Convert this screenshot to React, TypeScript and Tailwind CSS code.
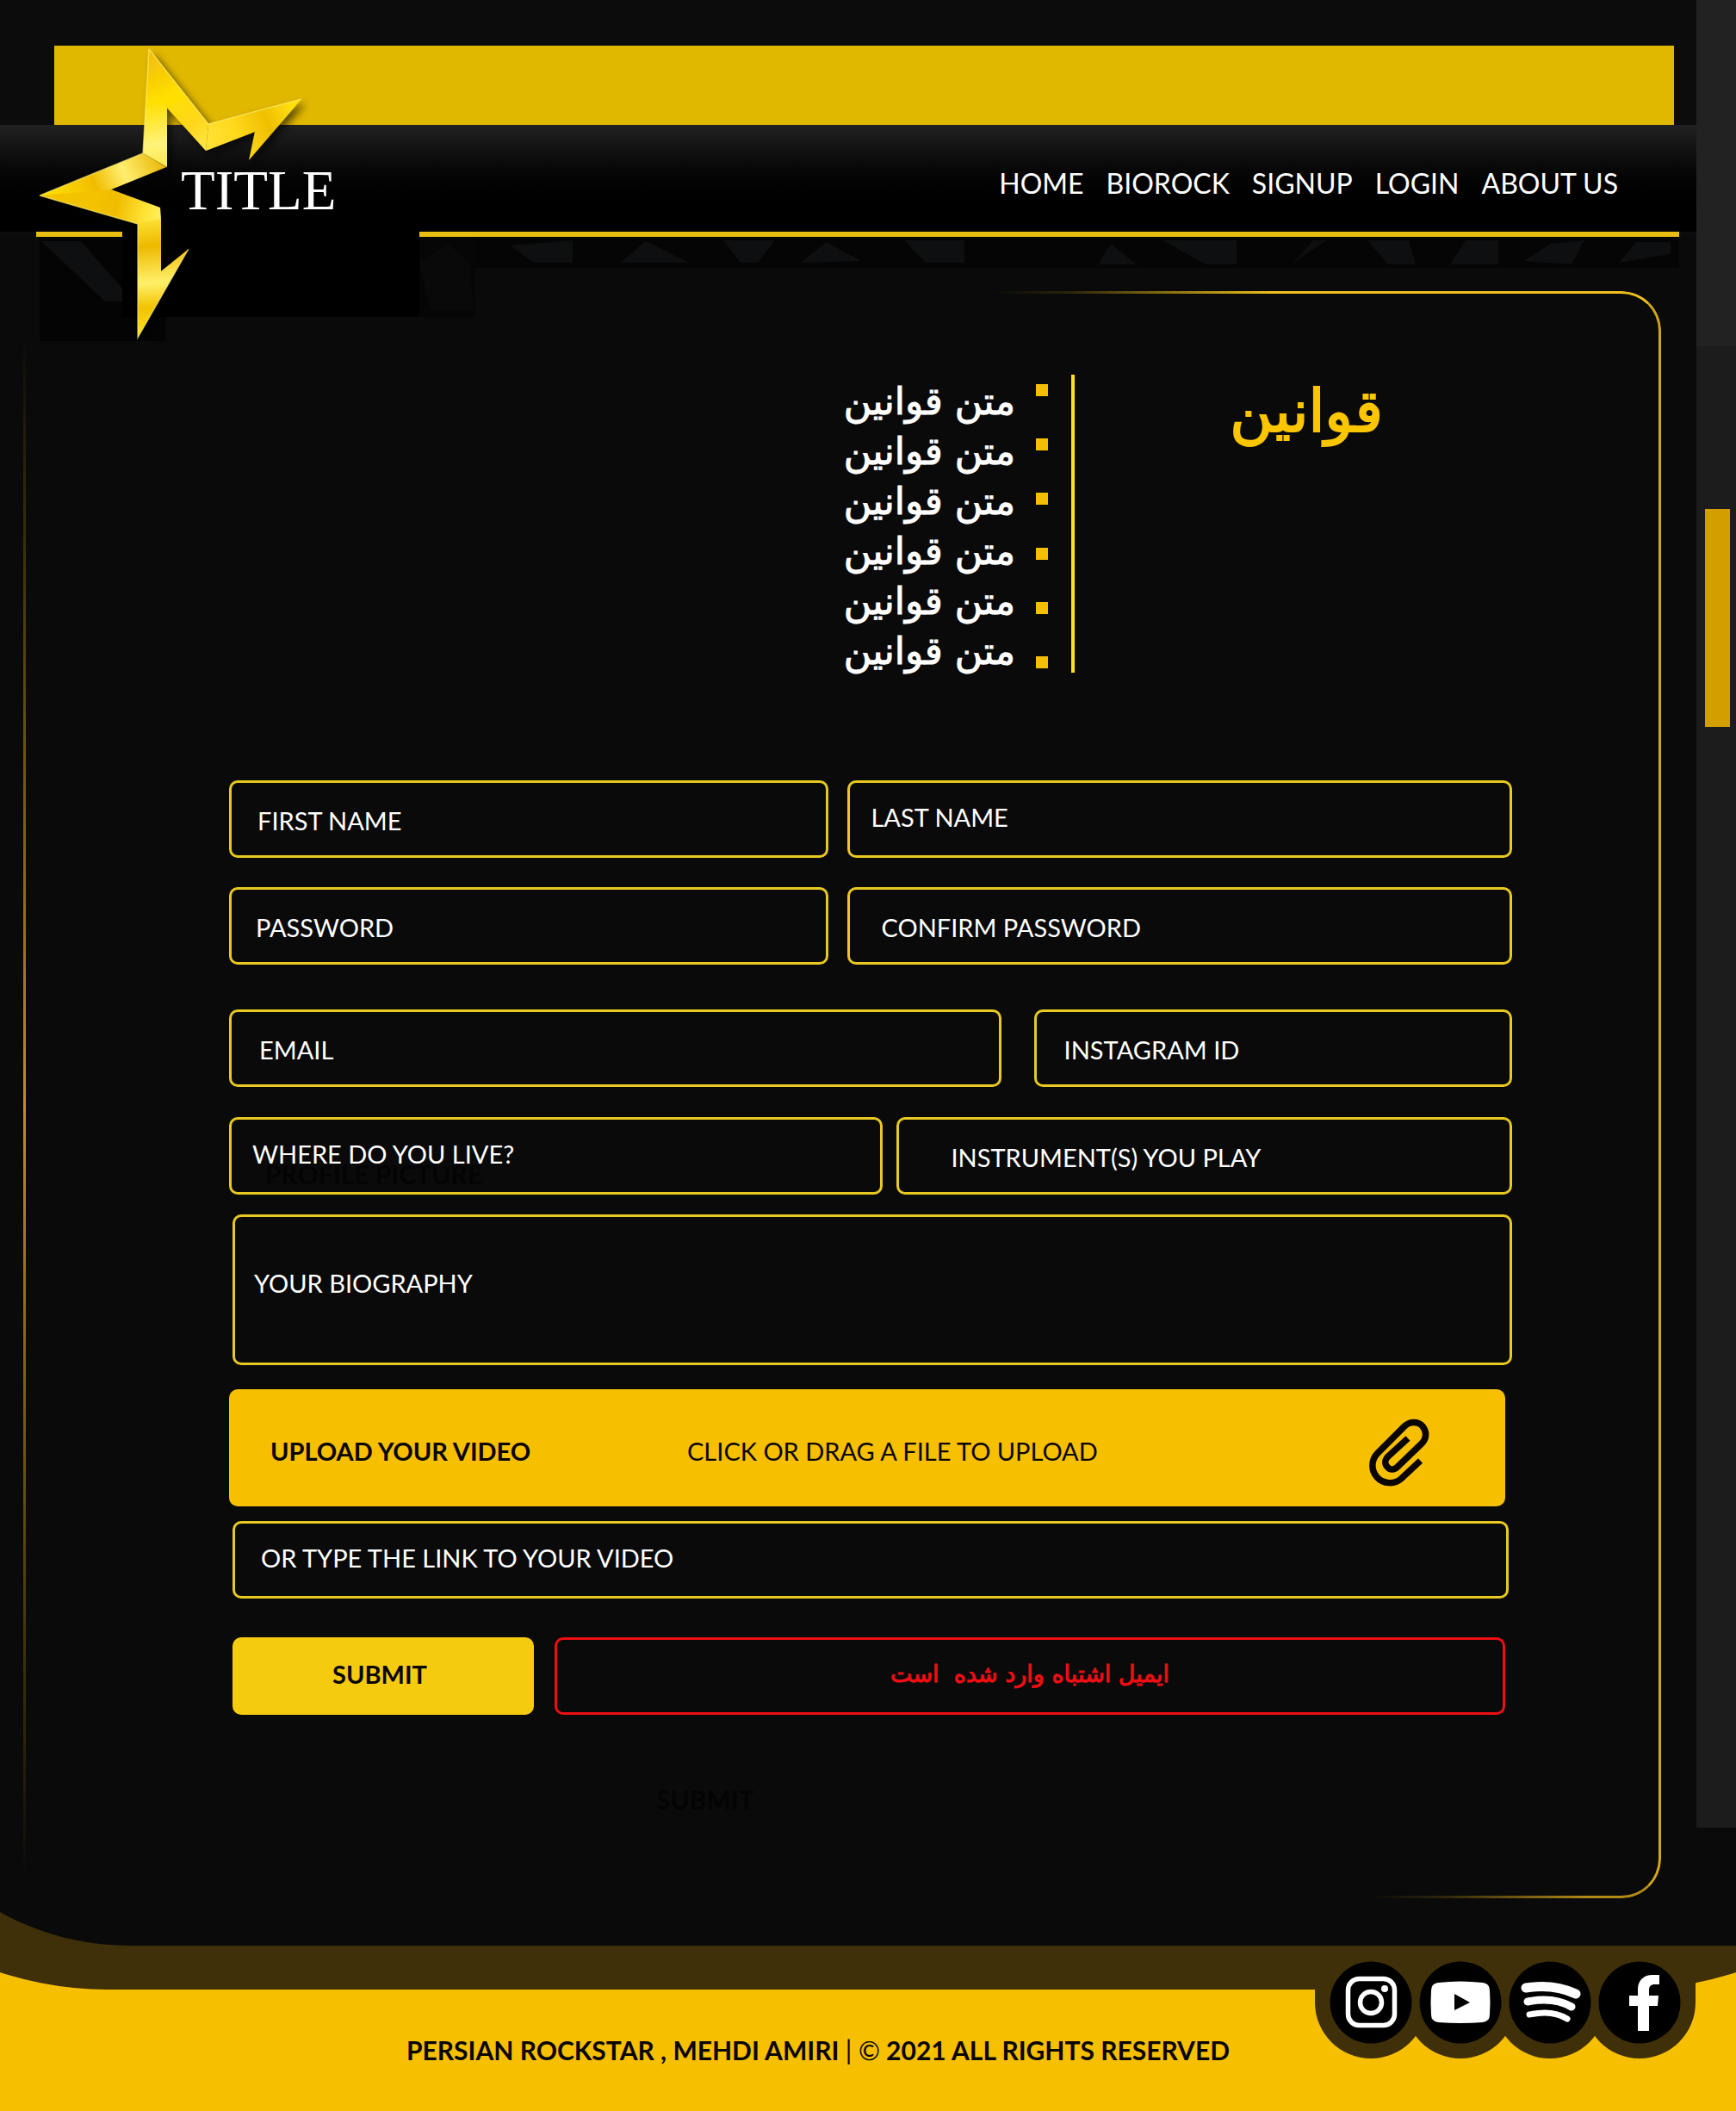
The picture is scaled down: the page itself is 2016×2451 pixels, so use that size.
import React from "react";

const NAV = ["HOME", "BIOROCK", "SIGNUP", "LOGIN", "ABOUT US"];
const RULES = [1, 2, 3, 4, 5, 6];

function Field({
  id,
  label,
  type = "text",
  pad,
}: {
  id: string;
  label: string;
  type?: string;
  pad: string;
}) {
  return (
    <label
      htmlFor={id}
      className={`relative flex h-[90px] min-w-0 items-center gap-4 rounded-[10px] border-[3px] border-[#e8c921] pr-4 text-[29px] leading-[36px] ${pad}`}
    >
      <span className="whitespace-nowrap">{label}</span>
      <input id={id} type={type} className="h-full min-w-0 flex-1 bg-transparent text-white outline-none" />
    </label>
  );
}

function StarLogo() {
  return (
    <svg
      aria-hidden="true"
      viewBox="40 50 320 350"
      className="pointer-events-none absolute top-[-225px] left-[40px] h-[350px] w-[320px]"
    >
      <defs>
        <linearGradient id="armTop" x1="173" y1="57" x2="190" y2="194" gradientUnits="userSpaceOnUse">
          <stop offset="0" stopColor="#f2b90c" />
          <stop offset="0.45" stopColor="#ffe000" />
          <stop offset="0.8" stopColor="#fff27a" />
          <stop offset="1" stopColor="#ffe94a" />
        </linearGradient>
        <linearGradient id="armFall" x1="173" y1="57" x2="239" y2="175" gradientUnits="userSpaceOnUse">
          <stop offset="0" stopColor="#f2b90c" />
          <stop offset="0.45" stopColor="#ffe000" />
          <stop offset="0.75" stopColor="#ffd61c" />
          <stop offset="1" stopColor="#ffe94a" />
        </linearGradient>
        <linearGradient id="armRight" x1="236" y1="165" x2="340" y2="125" gradientUnits="userSpaceOnUse">
          <stop offset="0" stopColor="#ffe23a" />
          <stop offset="0.35" stopColor="#ffd91c" />
          <stop offset="0.7" stopColor="#efbf00" />
          <stop offset="1" stopColor="#ffe010" />
        </linearGradient>
        <linearGradient id="armLeft" x1="190" y1="182" x2="60" y2="240" gradientUnits="userSpaceOnUse">
          <stop offset="0" stopColor="#e8b400" />
          <stop offset="0.35" stopColor="#ffee70" />
          <stop offset="0.6" stopColor="#f0bd00" />
          <stop offset="1" stopColor="#ffe100" />
        </linearGradient>
        <linearGradient id="armLow" x1="100" y1="235" x2="187" y2="255" gradientUnits="userSpaceOnUse">
          <stop offset="0" stopColor="#f3c300" />
          <stop offset="0.4" stopColor="#f0bd00" />
          <stop offset="0.8" stopColor="#ffe53a" />
          <stop offset="1" stopColor="#ffee60" />
        </linearGradient>
        <linearGradient id="armDown" x1="175" y1="250" x2="185" y2="392" gradientUnits="userSpaceOnUse">
          <stop offset="0" stopColor="#ffe53a" />
          <stop offset="0.25" stopColor="#edb900" />
          <stop offset="0.55" stopColor="#fff06a" />
          <stop offset="0.75" stopColor="#f2c200" />
          <stop offset="1" stopColor="#ffe62a" />
        </linearGradient>
        <filter id="starShadow" x="-20%" y="-20%" width="140%" height="140%">
          <feDropShadow dx="5" dy="5" stdDeviation="5" floodColor="#000" floodOpacity="0.6" />
        </filter>
      </defs>
      <g filter="url(#starShadow)">
        <path d="M173 57L194 84V194L166 178Z" fill="url(#armTop)" />
        <path d="M173 57L242 144L239 175L193 124L172 90Z" fill="url(#armFall)" />
        <path d="M242 144L350 115L289 186L296 153L239 175Z" fill="url(#armRight)" />
        <path d="M166 178L193 194L129 220L130 232L46 227Z" fill="url(#armLeft)" />
        <path d="M46 227L129 220L186 241L187 256L160 260Z" fill="url(#armLow)" />
        <path d="M187 254V315L219 289L160 392V259Z" fill="url(#armDown)" />
      </g>
      <path
        d="M173 57L242 144L350 115M46 227L166 178L173 57M46 227L160 260V392L219 289"
        fill="none"
        stroke="#fff27a"
        strokeOpacity="0.6"
        strokeWidth="1.5"
      />
    </svg>
  );
}

function Paperclip() {
  return (
    <svg aria-hidden="true" viewBox="0 0 90 95" className="h-[95px] w-[90px]">
      <path
        d="M69.500 58L47 79C39 86 26 85 19 77C12 69 12 57 20 49L51 18C57 12 67 12 72 18C77 24 77 32 71 38L43 65C39 69 34 69 31 65C28 62 28 57 32 53L55 32"
        fill="none"
        stroke="#0a0500"
        strokeWidth="7.5"
      />
    </svg>
  );
}

const SOCIALS = [
  {
    name: "Instagram",
    art: (
      <g fill="none" stroke="#fff" strokeWidth="5.500">
        <rect x="-26.500" y="-27.500" width="54" height="54" rx="13" />
        <circle cx="0" cy="0" r="12.500" />
        <circle cx="16" cy="-16" r="4" fill="#fff" stroke="none" />
      </g>
    ),
  },
  {
    name: "YouTube",
    art: (
      <path
        fill="#fff"
        fillRule="evenodd"
        d="M-26 -23Q0 -26 26 -23Q34 -22 34 -14Q35 0 34 14Q34 22 26 23Q0 25 -26 23Q-34 22 -34 14Q-35 0 -34 -14Q-34 -22 -26 -23ZM-7 -10V9L11 0Z"
      />
    ),
  },
  {
    name: "Spotify",
    art: (
      <g fill="none" stroke="#fff" strokeLinecap="round">
        <path d="M-28 -17Q4 -22 30 -10" strokeWidth="11" />
        <path d="M-26 -1Q4 -7 25 5" strokeWidth="9" />
        <path d="M-24 14Q3 8 20 19" strokeWidth="7" />
      </g>
    ),
  },
  {
    name: "Facebook",
    art: (
      <path
        fill="#fff"
        d="M-2 33V4H-12V-8H-2V-15C-2 -26 5 -32 15 -32H23V-21H18C13 -21 11 -19 11 -14V-8H22L21 4H11V33Z"
      />
    ),
  },
];

export default function App() {
  return (
    <div className="flex min-h-screen flex-col bg-[#0a0a0a] font-['Lato',sans-serif] text-white">
      <div className="flex">
        <div className="min-w-0 flex-1">
          <header className="bg-[#0c0c0c] pt-[53px]">
            <div className="mr-[26px] ml-[63px] h-[92px] bg-[#e1b800]" />
            <div className="flex h-[124px] items-start justify-between bg-gradient-to-b from-[#212122] to-black to-90% pr-[91px]">
              <h1 className="mt-[40px] ml-[210px] font-['Liberation_Serif',serif] text-[65px] leading-[72px]">
                TITLE
              </h1>
              <nav aria-label="Main" className="mt-[49px] flex gap-[26px] text-[32px] leading-[38px]">
                {NAV.map((n) => (
                  <a key={n} href="#">
                    {n}
                  </a>
                ))}
              </nav>
            </div>
            <div className="mr-[20px] ml-[42px] flex">
              <div className="h-[6px] w-[100px] bg-[#e8be12]" />
              <div className="w-[345px]" />
              <div className="h-[6px] flex-1 bg-[#e8be12]" />
            </div>
          </header>

          <div aria-hidden="true" className="relative h-[36px]">
            <div className="absolute top-0 left-[46px] h-[121px] w-[146px] bg-[#040404]" />
            <div className="absolute top-[-6px] left-[142px] h-[99px] w-[345px] bg-black" />
            <div className="absolute top-0 left-[487px] h-[93px] w-[65px] bg-[#060606]" />
            <div className="absolute top-0 right-[20px] left-[552px] h-[36px] bg-[#050505]" />
            <svg viewBox="0 0 1970 125" className="absolute top-0 left-0 h-[125px] w-[1970px] max-w-full">
              <g fill="#0e0f10">
                <path d="M48 5H94L142 60V75H122Z" />
                <path d="M487 30L520 8L545 30L550 85H500Z" fillOpacity="0.4" />
                <path d="M592 10L665 4V30H620ZM720 30L750 5L800 30ZM840 4H900L880 30H860Z" />
                <path d="M930 30L960 6L1000 28ZM1050 4H1120V30H1075Z" />
                <path d="M1275 32L1290 8L1320 32ZM1350 4H1436V32H1400ZM1500 32L1525 4H1540ZM1588 4H1636L1644 32H1612Z" />
                <path d="M1684 32L1702 4H1740V32ZM1770 28L1800 8L1840 4L1825 32ZM1880 30L1900 6H1940V20Z" />
              </g>
            </svg>
            <StarLogo />
          </div>

          <main className="relative mt-[27px] mr-[41px] ml-[27px] pb-[97px]">
            <div
              aria-hidden="true"
              className="pointer-events-none absolute top-0 right-0 h-1/2 w-[41%] rounded-tr-[46px] border-t-[3px] border-r-[3px] border-t-[#ecc01a] border-r-[#d3a51a] [mask-image:linear-gradient(to_right,transparent,rgba(0,0,0,0.15)_12%,#000_42%)]"
            />
            <div
              aria-hidden="true"
              className="pointer-events-none absolute right-0 bottom-0 h-1/2 w-[18%] rounded-br-[46px] border-r-[3px] border-b-[3px] border-r-[#d3a51a] border-b-[#b28a18] [mask-image:linear-gradient(to_right,transparent,rgba(0,0,0,0.2)_25%,#000_75%)]"
            />
            <div
              aria-hidden="true"
              className="pointer-events-none absolute top-[50px] bottom-[24px] left-0 w-[3px] bg-linear-to-b from-transparent via-[#bd9310] to-transparent"
            />

            <section dir="rtl" className="flex items-start ps-[323px] pt-[97px] font-['DejaVu_Sans',sans-serif]">
              <h2 className="w-[178px] text-[68px] leading-[86px] whitespace-nowrap text-[#fbc500] [-webkit-text-stroke:2px_#fbc500]">
                قوانین
              </h2>
              <div className="ms-[180px] h-[346px] w-[4px] bg-[#ffe11c]" />
              <div aria-hidden="true" className="ms-[27px] flex h-[346px] flex-col justify-between pt-[11px] pb-[5px]">
                {RULES.map((r) => (
                  <span key={r} className="block h-[14px] w-[14px] bg-[#f3bf00]" />
                ))}
              </div>
              <ul className="ms-[24px] pt-[2px] text-[44px] leading-[58px] [-webkit-text-stroke:1px_#fff]">
                {RULES.map((r) => (
                  <li key={r}>متن قوانین</li>
                ))}
              </ul>
            </section>

            <form className="mt-[121px] pr-[173px] pl-[239px]" onSubmit={(e) => e.preventDefault()}>
              <div className="grid grid-cols-[696fr_771fr] gap-[22px]">
                <Field id="first" label="FIRST NAME" pad="pt-1 pl-[30px]" />
                <Field id="last" label="LAST NAME" pad="pb-1 pl-6" />
              </div>
              <div className="mt-[34px] grid grid-cols-[696fr_771fr] gap-[22px]">
                <Field id="password" type="password" label="PASSWORD" pad="pt-1 pl-7" />
                <Field id="confirm" type="password" label="CONFIRM PASSWORD" pad="pt-1 pl-9" />
              </div>
              <div className="mt-[52px] grid grid-cols-[896fr_555fr] gap-[38px]">
                <Field id="email" type="email" label="EMAIL" pad="pt-1 pl-8" />
                <Field id="instagram" label="INSTAGRAM ID" pad="pt-1 pl-8" />
              </div>
              <div className="relative mt-[35px] grid grid-cols-[760fr_715fr] gap-[16px]">
                <span
                  aria-hidden="true"
                  className="absolute top-[48px] left-[42px] text-[30px] leading-[36px] font-bold text-[#040404]"
                >
                  PROFILE PICTURE
                </span>
                <Field id="city" label="WHERE DO YOU LIVE?" pad="pb-1 pl-6" />
                <Field id="instruments" label="INSTRUMENT(S) YOU PLAY" pad="pt-1 pl-15" />
              </div>
              <label
                htmlFor="bio"
                className="mt-[23px] ml-1 flex h-[175px] items-center gap-4 rounded-[10px] border-[3px] border-[#e8c921] pr-4 pb-4 pl-[22px] text-[29px] leading-[36px]"
              >
                <span>YOUR BIOGRAPHY</span>
                <textarea id="bio" className="block h-full flex-1 resize-none bg-transparent pt-[58px] outline-none" />
              </label>
              <label
                htmlFor="video"
                className="relative mt-[28px] mr-2 flex h-[136px] cursor-pointer items-center rounded-[10px] bg-[#f6bf00] pt-2 pr-[78px] pl-[48px] text-[29px] text-[#0a0500]"
              >
                <span className="flex-[484] font-bold">UPLOAD YOUR VIDEO</span>
                <span className="flex-[782]">CLICK OR DRAG A FILE TO UPLOAD</span>
                <Paperclip />
                <input id="video" type="file" className="absolute inset-0 cursor-pointer opacity-0" />
              </label>
              <div className="mt-[17px] mr-1 ml-1 grid">
                <Field id="link" type="url" label="OR TYPE THE LINK TO YOUR VIDEO" pad="pb-1 pl-[30px]" />
              </div>
              <div className="mt-[45px] mr-2 ml-1 grid grid-cols-[350fr_1104fr] gap-[24px]">
                <button
                  type="submit"
                  className="h-[90px] rounded-[10px] bg-[#f5cb10] pr-2 pb-1 text-[29px] font-bold text-[#0a0500]"
                >
                  SUBMIT
                </button>
                <p
                  role="alert"
                  dir="rtl"
                  className="flex h-[90px] items-center justify-center rounded-[10px] border-[3px] border-[#ee0e14] pb-1 font-['DejaVu_Sans',sans-serif] text-[27px] whitespace-pre text-[#ee0e14] [-webkit-text-stroke:1px_#ee0e14]"
                >
                  {"ایمیل اشتباه وارد شده  است"}
                </p>
              </div>
              <p aria-hidden="true" className="mt-[80px] pl-[496px] text-[30px] leading-[36px] font-bold text-[#040404]">
                SUBMIT
              </p>
            </form>
          </main>
        </div>

        <aside aria-hidden="true" className="flex h-[2122px] w-[46px] flex-col bg-[#1c1c1c]">
          <div className="h-[402px] bg-[#222222]" />
          <div className="mt-[189px] mr-[7px] ml-[10px] h-[253px] bg-[#d39e00]" />
        </aside>
      </div>

      <footer className="relative mt-[15px] flex-1 overflow-hidden bg-[#f6bf00] pt-[41px] text-[#0a0500]">
        <div
          aria-hidden="true"
          className="absolute right-[-275px] bottom-[141px] left-[-275px] h-[600px] rounded-b-[400px] bg-[#3f3009]"
        />
        <div
          aria-hidden="true"
          className="absolute right-0 bottom-[192px] left-[-158px] h-[600px] rounded-bl-[308px] bg-[#0a0a0a]"
        />
        <div className="relative flex items-start justify-between pr-[47px] pl-[472px]">
          <p className="mt-[102px] text-[30px] leading-[36px] font-bold">
            PERSIAN ROCKSTAR , MEHDI AMIRI <span className="font-normal">| ©</span> 2021 ALL RIGHTS RESERVED
          </p>
          <div className="flex">
            {SOCIALS.map((s, i) => (
              <a
                key={s.name}
                href="#"
                aria-label={s.name}
                className={`flex h-[130px] w-[130px] items-center justify-center rounded-b-[65px] bg-[#3f3009] ${i ? "-ml-[26px]" : ""}`}
              >
                <svg aria-hidden="true" viewBox="-48 -48 96 96" className="relative z-10 h-[96px] w-[96px]">
                  <circle r="47.500" fill="#000" />
                  {s.art}
                </svg>
              </a>
            ))}
          </div>
        </div>
      </footer>
    </div>
  );
}
